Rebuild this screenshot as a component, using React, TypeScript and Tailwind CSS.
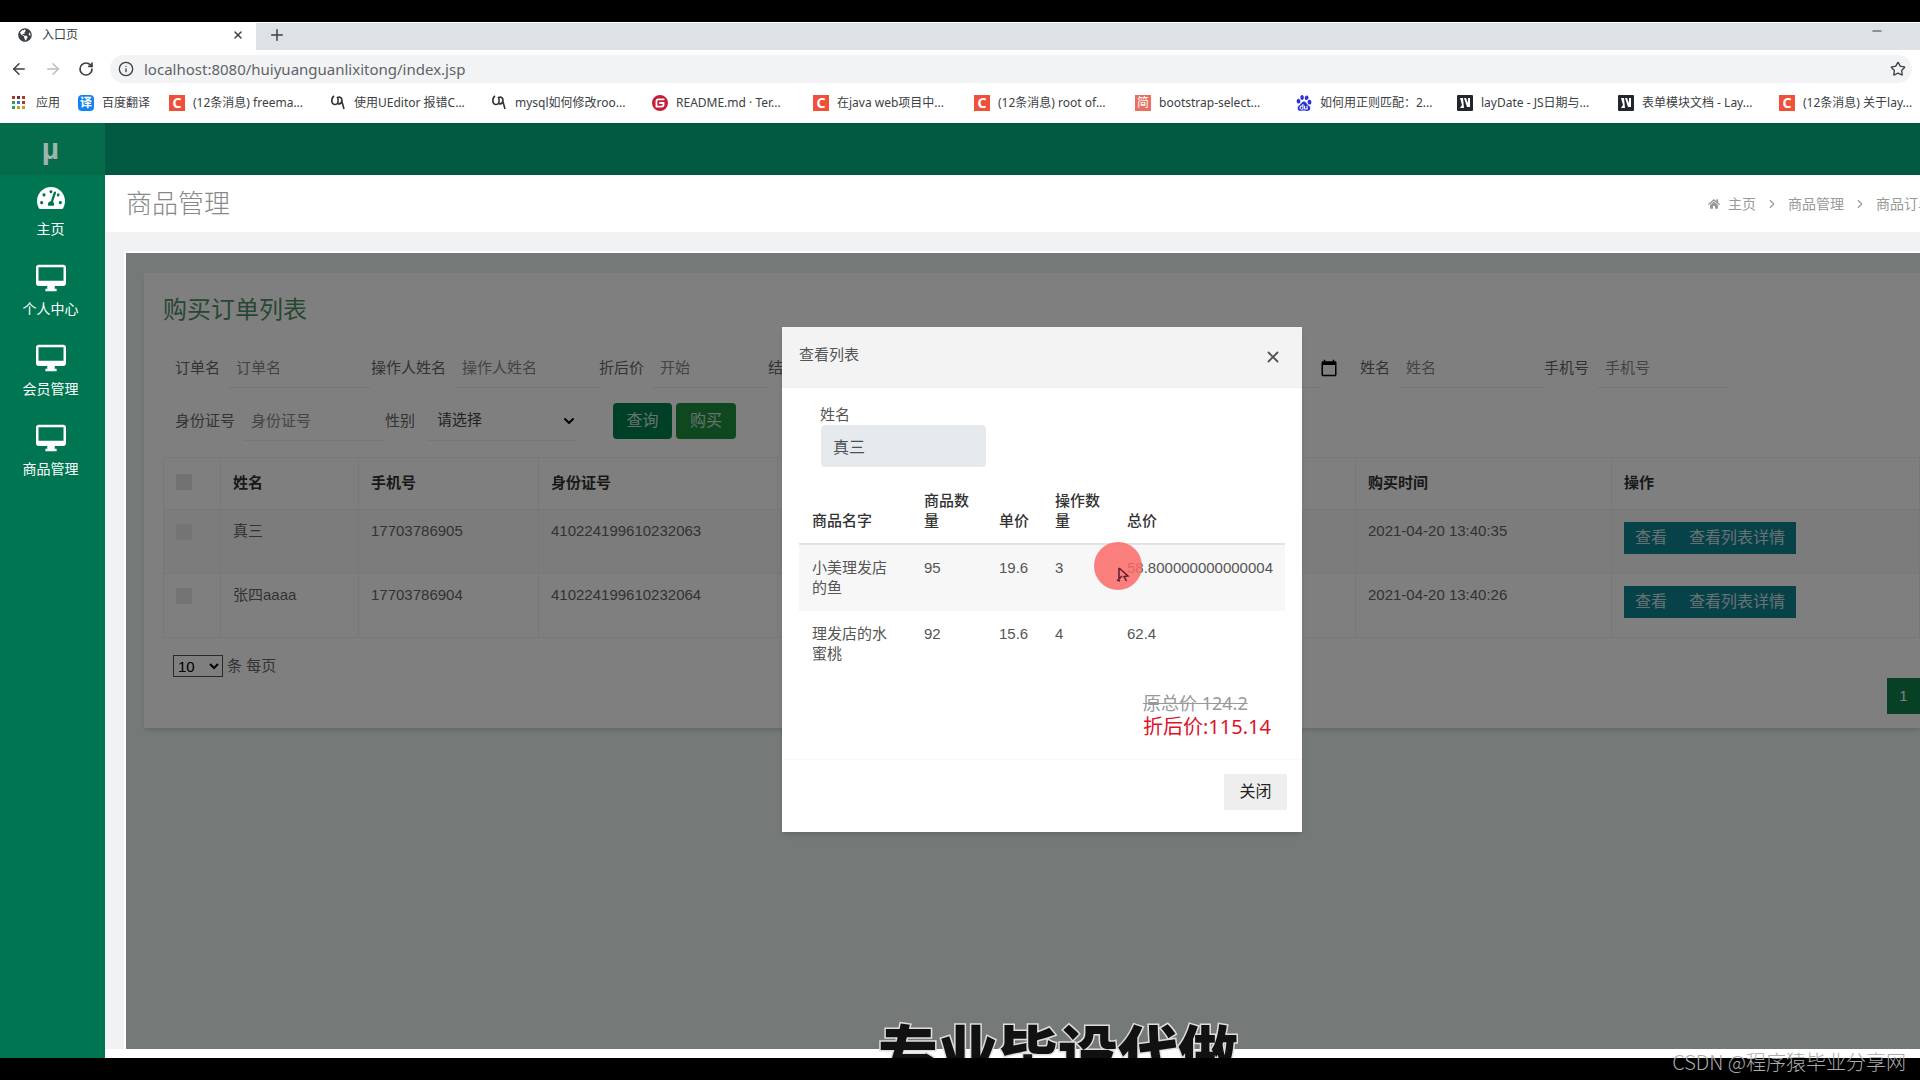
import { type ReactNode } from 'react';
import { ArrowLeft, ArrowRight, ChevronDown, ChevronRight, Info, Minus, Plus, RotateCw, Star, X } from 'lucide-react';
import { FaGlobeAmericas, FaHome, FaTachometerAlt } from 'react-icons/fa';
import { MdCalendarToday } from 'react-icons/md';
import { SiBaidu, SiGitee } from 'react-icons/si';

const cjk = "font-['Liberation_Sans','Noto_Sans_CJK_SC',sans-serif]";
const ui = "font-['Noto_Sans','Noto_Sans_CJK_SC',sans-serif]";

type IconKind = 'csdn' | 'sf' | 'gitee' | 'jianshu' | 'baidu' | 'layui';

const bookmarks: { icon: IconKind; text: string }[] = [
  { icon: 'csdn', text: '(12条消息) freema...' },
  { icon: 'sf', text: '使用UEditor 报错C...' },
  { icon: 'sf', text: 'mysql如何修改roo...' },
  { icon: 'gitee', text: 'README.md · Ter...' },
  { icon: 'csdn', text: '在java web项目中...' },
  { icon: 'csdn', text: '(12条消息) root of...' },
  { icon: 'jianshu', text: 'bootstrap-select...' },
  { icon: 'baidu', text: '如何用正则匹配：2...' },
  { icon: 'layui', text: 'layDate - JS日期与...' },
  { icon: 'layui', text: '表单模块文档 - Lay...' },
  { icon: 'csdn', text: '(12条消息) 关于lay...' },
];

const menu = ['个人中心', '会员管理', '商品管理'];

const orders = [
  { name: '真三', phone: '17703786905', card: '410224199610232063', time: '2021-04-20 13:40:35' },
  { name: '张四aaaa', phone: '17703786904', card: '410224199610232064', time: '2021-04-20 13:40:26' },
];

const goods = [
  { name: '小美理发店的鱼', stock: '95', price: '19.6', count: '3', total: '58.800000000000004' },
  { name: '理发店的水蜜桃', stock: '92', price: '15.6', count: '4', total: '62.4' },
];

function BookmarkIcon({ kind }: { kind: IconKind }) {
  switch (kind) {
    case 'csdn':
      return (
        <span className="flex size-4 items-center justify-center bg-[#f0503a] text-sm font-bold text-white">C</span>
      );
    case 'sf':
      return (
        <svg viewBox="0 0 16 16" className="size-4" fill="none" stroke="#333" strokeWidth="1.6">
          <path d="M4 1C1 3 1 9 4.500 9.500 8 10 9 6 7.500 2.500 10 1.500 12.500 3 12 6c-.3 2-2 3-4 3M11.500 5l2.500 9" />
        </svg>
      );
    case 'gitee':
      return <SiGitee className="size-4 text-[#c71d3a]" />;
    case 'jianshu':
      return <span className="flex size-4 items-center justify-center bg-[#e8705f] text-xs text-white">简</span>;
    case 'baidu':
      return <SiBaidu className="size-4 text-[#2a32d8]" />;
    default:
      return (
        <svg viewBox="0 0 16 16" className="size-4">
          <rect width="16" height="16" rx="1" fill="#23262e" />
          <path d="M3 3l2 7-2 3h4L6 3zM7 3l3 9h3V3h-2v5L9 3z" fill="#fff" />
        </svg>
      );
  }
}

function Browser() {
  return (
    <header className={`${ui} text-[#3c4043]`}>
      <div className="flex h-7 items-stretch border-t border-white bg-[#dee1e6]">
        <div className="flex w-64 items-center bg-white pb-1 pl-[18px] pr-3 text-xs">
          <FaGlobeAmericas className="mr-2.5 size-[14px]" />
          <span className="grow">入口页</span>
          <button aria-label="关闭标签页">
            <X className="size-3" strokeWidth={3} />
          </button>
        </div>
        <button aria-label="新标签页" className="ml-3 pb-1">
          <Plus className="size-[18px]" />
        </button>
        <button aria-label="最小化" className="ml-auto mr-9 pb-3">
          <Minus className="size-[14px]" />
        </button>
      </div>
      <div className="flex h-[38px] items-center gap-4 pl-2.5 pr-2">
        <button aria-label="后退">
          <ArrowLeft className="size-[18px]" />
        </button>
        <button aria-label="前进" className="text-[#b9bcc0]">
          <ArrowRight className="size-[18px]" />
        </button>
        <button aria-label="刷新">
          <RotateCw className="size-4" strokeWidth={2.5} />
        </button>
        <div className="flex h-7 grow items-center gap-2.5 rounded-full bg-[#f1f3f4] pl-2 pr-1.5">
          <Info className="size-4" />
          <input
            aria-label="地址"
            className="grow bg-transparent text-[15px] text-[#5f6368] outline-none"
            defaultValue="localhost:8080/huiyuanguanlixitong/index.jsp"
          />
          <Star className="size-4" />
        </div>
      </div>
      <nav className="flex h-[34px] items-center overflow-hidden whitespace-nowrap pb-1 text-xs">
        <a href="#apps" className="flex w-[66px] shrink-0 items-center gap-2.5 pl-3">
          <svg viewBox="0 0 14 14" className="size-[14px]">
            {['#b3362c', '#7a2f2a', '#b3362c', '#2f9e5b', '#3b77d8', '#b3362c', '#2f9e5b', '#c9a21c', '#c9a21c'].map((c, i) => (
              <rect key={i} x={(i % 3) * 5} y={Math.floor(i / 3) * 5} width="3" height="3" fill={c} />
            ))}
          </svg>
          应用
        </a>
        <a href="#fanyi" className="ml-3 flex w-[91px] shrink-0 items-center gap-2">
          <span className="flex size-4 items-center justify-center rounded-sm bg-[#1482f0] text-xs font-bold text-white">译</span>
          百度翻译
        </a>
        {bookmarks.map((item, index) => (
          <a key={index} href="#bookmark" className="flex w-[161px] shrink-0 items-center gap-2">
            <BookmarkIcon kind={item.icon} />
            <span>{item.text}</span>
          </a>
        ))}
      </nav>
    </header>
  );
}

function DesktopIcon() {
  return (
    <svg viewBox="0 0 24 24" className="h-8 w-[30px]" fill="currentColor" preserveAspectRatio="none">
      <path d="M22 2H2C.9 2 0 2.900 0 4v12c0 1.100.9 2 2 2h7v2H7.500v2h9v-2H15v-2h7c1.100 0 2-.9 2-2V4c0-1.100-.9-2-2-2zm0 12H2V4h20v10z" />
    </svg>
  );
}

function MenuItem({ icon, text }: { icon: ReactNode; text: string }) {
  return (
    <a href="#menu" className="flex flex-col items-center gap-1.5 text-sm/5 text-white">
      <span className="flex h-[30px] items-center">{icon}</span>
      {text}
    </a>
  );
}

function Sidebar() {
  return (
    <aside className="w-[105px] shrink-0 bg-[#007552]">
      <div className="flex h-[52px] items-center justify-center bg-[#056c4b] pr-1 text-3xl font-bold text-[#9db5ab]">µ</div>
      <nav className="flex flex-col gap-6 pr-1 pt-2">
        <MenuItem icon={<FaTachometerAlt className="size-7" />} text="主页" />
        {menu.map((text) => (
          <MenuItem key={text} icon={<DesktopIcon />} text={text} />
        ))}
      </nav>
    </aside>
  );
}

interface FieldProps {
  id: string;
  label: string;
  className: string;
  placeholder?: string;
}

function Field({ id, label, className, placeholder = label }: FieldProps) {
  return (
    <div className={`flex shrink-0 items-center ${className}`}>
      <label htmlFor={id} className="shrink-0">
        {label}
      </label>
      <input
        id={id}
        placeholder={placeholder}
        className="ml-2 h-10 w-0 grow border-b border-[#eee] bg-transparent px-2 placeholder:text-[#888]"
      />
    </div>
  );
}

function OrderCard() {
  return (
    <section className="ml-[18px] mt-5 h-[455px] bg-white pl-[19px] pt-[21px] text-[15px] text-[#666] shadow-md">
      <h2 className="text-2xl/8 text-[#4f8f66]">购买订单列表</h2>
      <div className="mt-[22px] flex pl-3">
        <Field id="order" label="订单名" className="w-[196px]" />
        <Field id="operator" label="操作人姓名" className="w-[228px]" />
        <Field id="price" label="折后价" placeholder="开始" className="w-[169px]" />
        <Field id="end" label="结束" className="w-[552px]" />
        <button aria-label="选择日期" className="mr-5 w-5 text-black">
          <MdCalendarToday className="size-[18px]" />
        </button>
        <Field id="name" label="姓名" className="w-[184px]" />
        <Field id="phone" label="手机号" className="w-[185px]" />
      </div>
      <div className="mt-[13px] flex h-10 items-center pl-3">
        <Field id="card" label="身份证号" className="w-[210px]" />
        <label htmlFor="sex" className="shrink-0">
          性别
        </label>
        <div className="relative ml-3">
          <select id="sex" className="h-10 w-[150px] appearance-none border-b border-[#eee] bg-transparent px-2.5 text-[#444]">
            <option>请选择</option>
          </select>
          <ChevronDown className="pointer-events-none absolute right-0 top-3 size-4 text-black" strokeWidth={3} />
        </div>
        <button className="ml-9 h-9 w-[59px] rounded-sm bg-[#00804f] text-base text-[#cde3d8]">查询</button>
        <button className="ml-1 h-9 w-[60px] rounded-sm bg-[#1f8f3c] text-base text-[#cde3d8]">购买</button>
      </div>
      <table className="mt-4 w-full table-fixed border-collapse border border-r-0 border-[#f0f0f0] text-left">
        <thead>
          <tr className="h-[52px] text-[#333] [&>th]:border [&>th]:border-[#f0f0f0] [&>th]:px-3">
            <th className="w-[57px]">
              <input type="checkbox" aria-label="全选" className="mb-1 block size-4 appearance-none bg-[#e4e4e4]" />
            </th>
            <th className="w-[138px]">姓名</th>
            <th className="w-[180px]">手机号</th>
            <th className="w-[239px]">身份证号</th>
            <th />
            <th className="w-[256px]">购买时间</th>
            <th className="w-[308px]">操作</th>
          </tr>
        </thead>
        <tbody>
          {orders.map((order) => (
            <tr
              key={order.phone}
              className="h-16 align-top odd:bg-[#f8f8f8] [&>td]:border [&>td]:border-[#f0f0f0] [&>td]:px-3 [&>td]:pt-2.5"
            >
              <td>
                <input type="checkbox" aria-label={order.name} className="mt-1 block size-4 appearance-none bg-[#e8e8e8]" />
              </td>
              <td>{order.name}</td>
              <td>{order.phone}</td>
              <td>{order.card}</td>
              <td />
              <td>{order.time}</td>
              <td>
                <div className="mt-0.5 flex text-base text-[#cfe3e6]">
                  <button className="h-8 w-[54px] bg-[#0e8592]">查看</button>
                  <button className="h-8 w-[118px] bg-[#0e8592]">查看列表详情</button>
                </div>
              </td>
            </tr>
          ))}
        </tbody>
      </table>
      <div className="mt-4 flex justify-between">
        <label className="flex h-6 items-center gap-1 pl-2.5">
          <select className="h-[22px] w-[50px] border border-[#555] bg-white text-black">
            <option>10</option>
          </select>
          条 每页
        </label>
        <button className="mt-6 h-9 w-[33px] bg-[#0e8048] text-white">1</button>
      </div>
    </section>
  );
}

function DetailDialog() {
  return (
    <div
      role="dialog"
      aria-label="查看列表"
      className="relative mt-[74px] flex h-[505px] w-[520px] flex-col bg-white text-[15px]/5 text-[#555] shadow-md"
    >
      <div className="flex h-[61px] items-center justify-between border-b border-[#eee] bg-[#f3f3f3] pl-[17px] pr-5">
        <h3 className="pb-1">查看列表</h3>
        <button aria-label="关闭窗口">
          <X className="size-[18px]" strokeWidth={2.5} />
        </button>
      </div>
      <div className="px-[17px] pt-[17px]">
        <label htmlFor="buyer" className="block pl-[21px]">
          姓名
        </label>
        <input
          id="buyer"
          readOnly
          value="真三"
          className="ml-[22px] block h-[42px] w-[165px] rounded-sm bg-[#e7eaec] px-3 text-base text-[#495057]"
        />
        <table className="mt-3 w-full table-fixed border-collapse text-left">
          <thead>
            <tr className="border-b-2 border-[#e3e3e3] align-bottom text-[#333] [&>th]:px-[13px] [&>th]:py-3 [&>th]:font-medium">
              <th className="w-28">商品名字</th>
              <th className="w-[75px]">商品数量</th>
              <th className="w-14">单价</th>
              <th className="w-[72px]">操作数量</th>
              <th>总价</th>
            </tr>
          </thead>
          <tbody>
            {goods.map((item) => (
              <tr key={item.name} className="align-top odd:bg-[#f7f7f7] [&>td]:pl-[13px] [&>td]:pr-2.5 [&>td]:py-[13px]">
                <td>{item.name}</td>
                <td>{item.stock}</td>
                <td>{item.price}</td>
                <td>{item.count}</td>
                <td>{item.total}</td>
              </tr>
            ))}
          </tbody>
        </table>
        <div className={`${ui} ml-[344px] mt-3.5 whitespace-nowrap`}>
          <p className="text-lg/6 text-[#999] line-through">原总价 124.2</p>
          <p className="text-xl/6 text-[#e0112b]">折后价:115.14</p>
        </div>
      </div>
      <div className="mt-auto flex h-[73px] items-center justify-end border-t border-[#f8f8f8] pb-2 pr-[15px]">
        <button className="h-9 w-[63px] bg-[#eee] text-base text-[#222]">关闭</button>
      </div>
      <div className="pointer-events-none absolute left-[312px] top-[215px] size-12 rounded-full bg-[#fb6a66]/85" />
      <svg viewBox="0 0 16 16" className="pointer-events-none absolute left-[334px] top-[240px] size-4" fill="none" stroke="#5c1f2c">
        <path d="M3 1l9 8-4 .5 2.500 4.500M3 1v11l3-3M1 13l3 1" strokeWidth="1.5" />
      </svg>
    </div>
  );
}

export default function App() {
  return (
    <div className={`${cjk} flex h-screen flex-col overflow-hidden bg-black`}>
      <div className="relative mb-[22px] mt-[22px] flex grow flex-col overflow-hidden bg-white">
        <Browser />
        <div className="mt-px flex min-h-0 grow">
          <Sidebar />
          <div className="flex min-w-0 grow flex-col bg-[#f1f2f4]">
            <div className="h-[52px] shrink-0 bg-[#005a41]" />
            <div className="flex h-[57px] shrink-0 items-center justify-between bg-white pl-[21px]">
              <h1 className="pt-0.5 text-[26px] font-light text-[#888]">商品管理</h1>
              <nav className="flex w-[212px] shrink-0 items-center overflow-hidden whitespace-nowrap text-sm text-[#999]">
                <FaHome className="mr-2 size-3 shrink-0" />
                <a href="#home">主页</a>
                <ChevronRight className="mx-[9px] size-[14px] shrink-0" />
                <a href="#goods">商品管理</a>
                <ChevronRight className="mx-[9px] size-[14px] shrink-0" />
                <a href="#orders">商品订单</a>
              </nav>
            </div>
            <div className="flex min-h-0 grow border-b-[9px] border-white pl-[21px] pt-[21px]">
              <main className="relative grow overflow-hidden bg-[#ebf4f0] outline-2 outline-white">
                <OrderCard />
                <div className="absolute inset-0 flex justify-center bg-black/50 pl-[38px]">
                  <DetailDialog />
                </div>
              </main>
            </div>
          </div>
        </div>
        <p className="absolute -bottom-7 left-[878px] whitespace-nowrap text-[60px]/[60px] font-black text-[#111] [-webkit-text-stroke:3px_#ddd] [paint-order:stroke]">
          专业毕设代做
        </p>
      </div>
      <p className="absolute bottom-1 right-[14px] font-['Noto_Sans_CJK_SC',sans-serif] text-xl/7 font-light text-[#aaa]">
        CSDN @程序猿毕业分享网
      </p>
    </div>
  );
}
